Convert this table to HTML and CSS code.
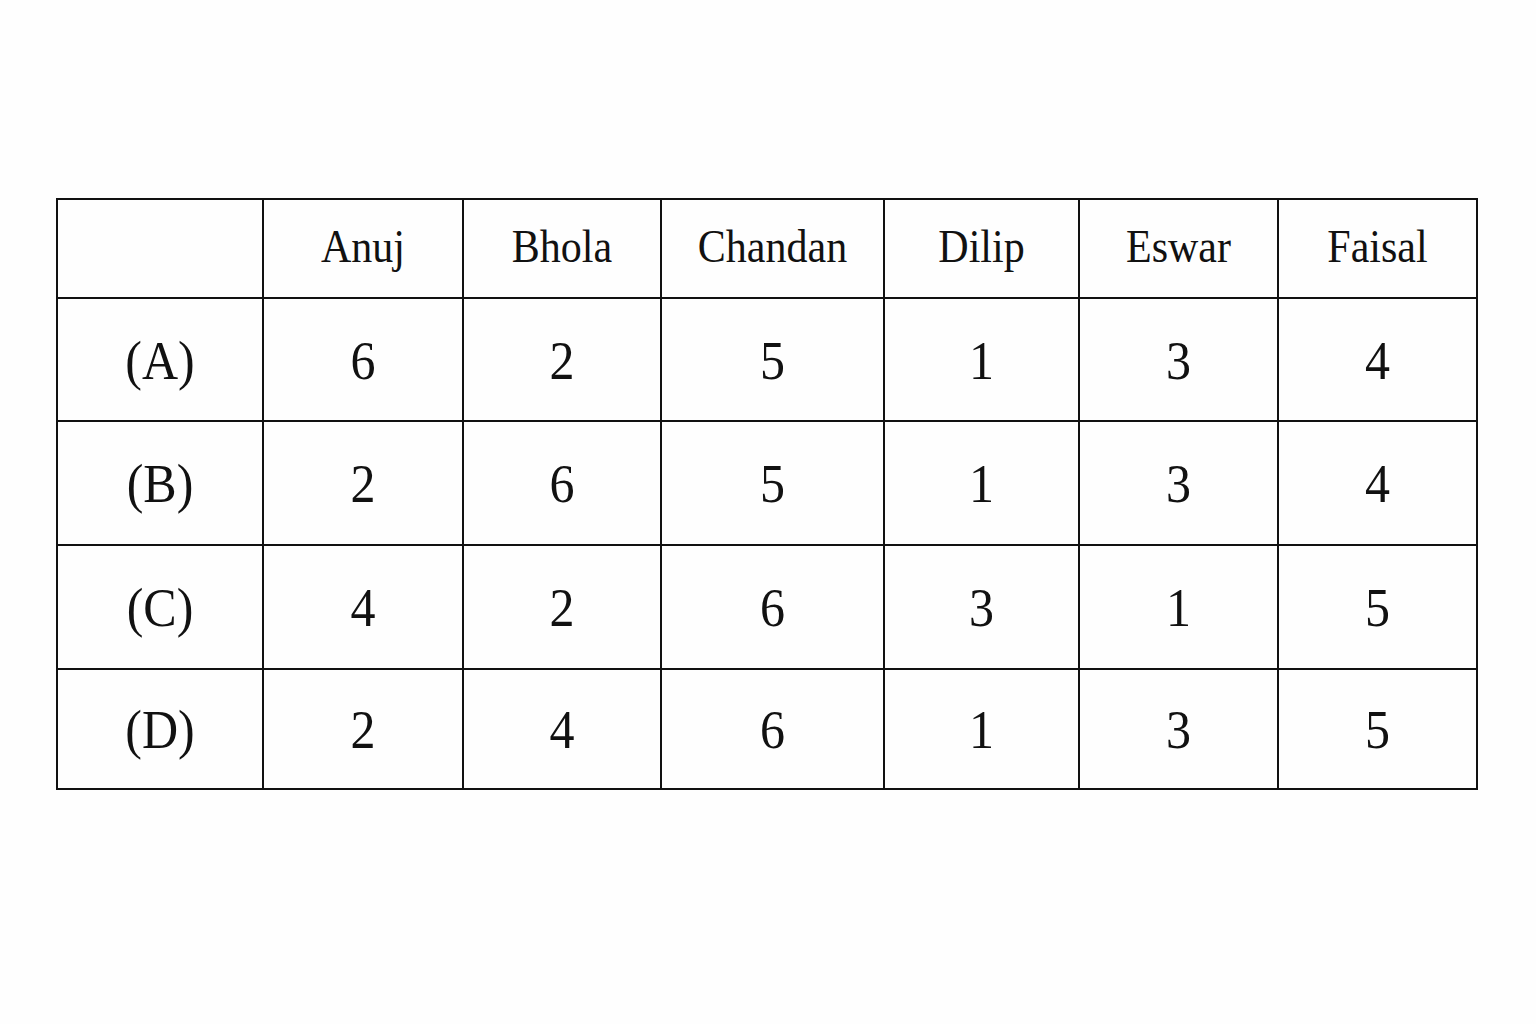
FILE: index.html
```html
<!DOCTYPE html>
<html lang="en">
<head>
<meta charset="utf-8">
<title>Ranking table</title>
<link rel="stylesheet" href="styles.css">
</head>
<body>
<div class="page">
  <table class="grid">
    <colgroup>
      <col class="c0"><col class="c1"><col class="c2"><col class="c3"><col class="c4"><col class="c5"><col class="c6">
    </colgroup>
    <thead>
      <tr class="head">
        <th></th><th><span class="t">Anuj</span></th><th><span class="t">Bhola</span></th><th><span class="t">Chandan</span></th><th><span class="t">Dilip</span></th><th><span class="t">Eswar</span></th><th><span class="t">Faisal</span></th>
      </tr>
    </thead>
    <tbody>
      <tr class="r1"><th><span class="t">(A)</span></th><td><span class="t">6</span></td><td><span class="t">2</span></td><td><span class="t">5</span></td><td><span class="t">1</span></td><td><span class="t">3</span></td><td><span class="t">4</span></td></tr>
      <tr class="r2"><th><span class="t">(B)</span></th><td><span class="t">2</span></td><td><span class="t">6</span></td><td><span class="t">5</span></td><td><span class="t">1</span></td><td><span class="t">3</span></td><td><span class="t">4</span></td></tr>
      <tr class="r3"><th><span class="t">(C)</span></th><td><span class="t">4</span></td><td><span class="t">2</span></td><td><span class="t">6</span></td><td><span class="t">3</span></td><td><span class="t">1</span></td><td><span class="t">5</span></td></tr>
      <tr class="r4"><th><span class="t">(D)</span></th><td><span class="t">2</span></td><td><span class="t">4</span></td><td><span class="t">6</span></td><td><span class="t">1</span></td><td><span class="t">3</span></td><td><span class="t">5</span></td></tr>
    </tbody>
  </table>
</div>
</body>
</html>
```
FILE: styles.css
```css
html, body {
  margin: 0;
  padding: 0;
  background: #fefefe;
}
.page {
  width: 1536px;
  height: 1024px;
  padding: 198px 0 0 56px;
  box-sizing: border-box;
}
.grid {
  table-layout: fixed;
  border-collapse: separate;
  border-spacing: 2px;
  background: #111;
  font-family: "Liberation Serif", "Times New Roman", serif;
  color: #111;
  width: 1422px;
}
.grid th, .grid td {
  background: #fefefe;
  padding: 0;
  text-align: center;
  vertical-align: middle;
  font-weight: normal;
  line-height: 1;
}
.t {
  display: inline-block;
  transform: scaleY(1.09);
}
.c0 { width: 204px; }
.c1 { width: 198px; }
.c2 { width: 196px; }
.c3 { width: 221px; }
.c4 { width: 193px; }
.c5 { width: 197px; }
.c6 { width: 197px; }
.head th { height: 97px; font-size: 42px; }
.head .t { position: relative; top: -2px; }
tbody th, tbody td { font-size: 50px; }
.r1 th, .r1 td { height: 121px; }
.r2 th, .r2 td { height: 122px; }
.r3 th, .r3 td { height: 122px; }
.r4 th, .r4 td { height: 118px; }
```
